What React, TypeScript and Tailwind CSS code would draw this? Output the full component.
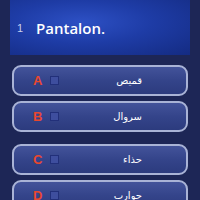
import React from 'react';

interface Option {
  letter: string;
  text: string;
  mt: string;
}

const options: Option[] = [
  { letter: 'A', text: 'قميص', mt: 'mt-[10px]' },
  { letter: 'B', text: 'سروال', mt: 'mt-[5px]' },
  { letter: 'C', text: 'حذاء', mt: 'mt-[12px]' },
  { letter: 'D', text: 'جوارب', mt: 'mt-[5px]' },
];

const OptionButton: React.FC<{ option: Option }> = ({ option }) => (
  <div
    className={`${option.mt} mx-[12px] h-[31px] rounded-[9px] border-2 border-[#a9b3d6] bg-gradient-to-b from-[#43539a] via-[#34448a] to-[#2c3b7e] flex items-center pl-[19px] pr-[44px]`}
  >
    <span className="text-[13px] font-bold text-[#e8472e] leading-none w-[8px]" style={{ fontFamily: '"Liberation Sans", Arial, sans-serif' }}>
      {option.letter}
    </span>
    <span className="ml-[9px] w-[9px] h-[9px] border border-[#22307a] bg-[#3e4e9e]" />
    <span
      className="ml-auto text-[10px] text-white leading-none"
      dir="rtl"
      style={{ fontFamily: '"DejaVu Sans", sans-serif' }}
    >
      {option.text}
    </span>
  </div>
);

export default function App() {
  return (
    <div className="w-[200px] h-[200px] overflow-hidden bg-[#1d2656]">
      {/* Question panel */}
      <div className="mx-[10px] h-[55px] bg-[radial-gradient(ellipse_at_40%_40%,#2d50c4_0%,#1e3ca6_45%,#142b82_100%)] flex items-center pl-[7px] pt-[1px]">
        <span className="text-[11px] text-[#c8d0ee] w-[19px]" style={{ fontFamily: '"Liberation Sans", Arial, sans-serif' }}>
          1
        </span>
        <span className="text-[15px] font-semibold text-white" style={{ fontFamily: '"Open Sans", sans-serif' }}>
          Pantalon.
        </span>
      </div>

      {options.map((o) => (
        <OptionButton key={o.letter} option={o} />
      ))}
    </div>
  );
}
